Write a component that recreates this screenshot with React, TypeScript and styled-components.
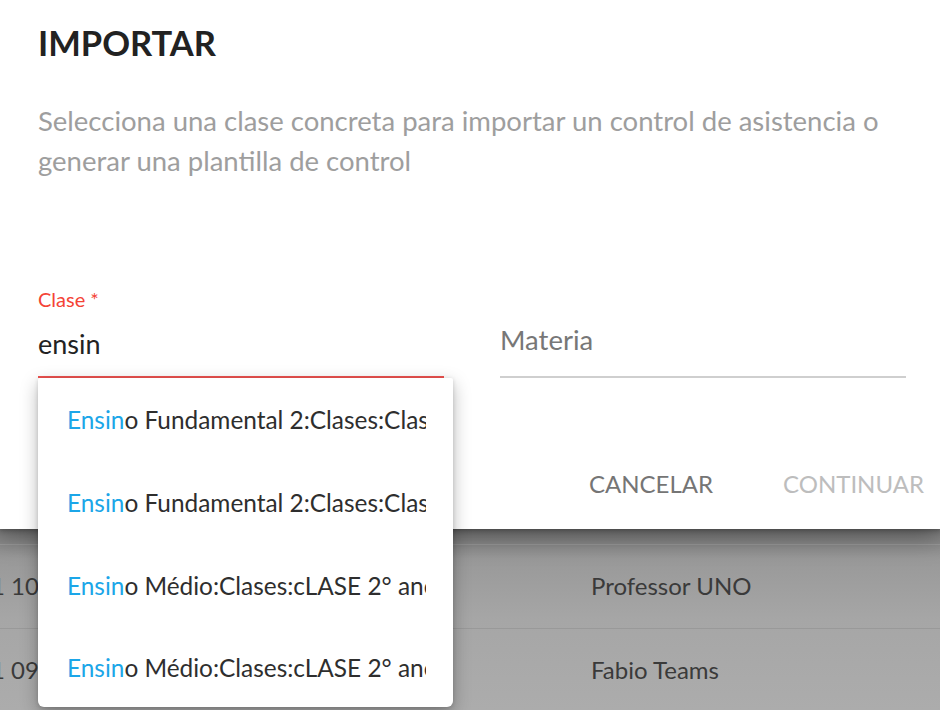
import * as React from 'react';
import styled, { createGlobalStyle } from 'styled-components';

const Global = createGlobalStyle`
  html, body {
    margin: 0;
    padding: 0;
    background: #aaaaaa;
  }
  body {
    font-family: Lato, "Open Sans", sans-serif;
  }
`;

const Screen = styled.div`
  width: 940px;
  height: 710px;
  overflow: hidden;
  display: flex;
  flex-direction: column;
  background: #aaaaaa;
`;

const Dialog = styled.section`
  position: relative;
  z-index: 2;
  height: 529px;
  flex-shrink: 0;
  background: #ffffff;
  box-shadow: 0 8px 24px rgba(0, 0, 0, 0.35), 0 2px 4px rgba(0, 0, 0, 0.2);
  display: flex;
  flex-direction: column;
  padding: 0 34px 0 38px;
  box-sizing: border-box;
`;

const Title = styled.h2`
  margin: 23px 0 0 0;
  font-size: 34.5px;
  line-height: 40px;
  font-weight: 700;
  color: #222222;
`;

const Description = styled.p`
  margin: 38px 0 0 0;
  font-size: 27.5px;
  line-height: 40px;
  color: #9e9e9e;
`;

const Fields = styled.div`
  margin-top: 107px;
  display: grid;
  grid-template-columns: 406px 406px;
  column-gap: 56px;
  align-items: end;
`;

const Field = styled.div`
  position: relative;
  display: flex;
  flex-direction: column;
`;

const Label = styled.label`
  font-size: 20px;
  line-height: 22px;
  color: #f44336;
`;

const Input = styled.div<{ $focused?: boolean }>`
  padding: ${p => (p.$focused ? '12px 0 10px' : '8px 0 14px')};
  font-size: ${p => (p.$focused ? '27px' : '27.5px')};
  line-height: 44px;
  color: ${p => (p.$focused ? '#222222' : '#777777')};
  border-bottom: 2px solid ${p => (p.$focused ? '#ef5350' : '#cfcfcf')};
`;

const Menu = styled.ul`
  position: absolute;
  top: 100%;
  left: 0;
  width: 415px;
  margin: 0;
  padding: 0;
  list-style: none;
  background: #ffffff;
  border-radius: 2px 2px 6px 6px;
  box-shadow: 0 6px 18px rgba(0, 0, 0, 0.28), 0 1px 4px rgba(0, 0, 0, 0.15);
  z-index: 5;
`;

const Option = styled.li`
  height: 83px;
  display: flex;
  align-items: center;
  padding: 0 27px 0 29px;
  font-size: 24.4px;
  color: #2e2e2e;
  white-space: nowrap;
  overflow: hidden;

  &:last-child {
    height: 80px;
  }
`;

const OptionText = styled.span`
  display: block;
  overflow: hidden;
`;

const Match = styled.span`
  color: #1ba6e8;
`;

const Actions = styled.div`
  margin-top: auto;
  margin-right: -18px;
  padding-bottom: 24px;
  display: flex;
  justify-content: flex-end;
  gap: 70px;
`;

const Button = styled.button<{ $disabled?: boolean }>`
  font-family: inherit;
  border: none;
  background: none;
  padding: 0;
  height: 44px;
  font-size: 24px;
  text-transform: uppercase;
  color: ${p => (p.$disabled ? '#bdbdbd' : '#757575')};
`;

const Backdrop = styled.div`
  flex: 1;
  display: flex;
  flex-direction: column;
  background: linear-gradient(#7c7c7c 0px, #999999 30px, #a6a6a6 90px, #acacac 180px);
`;

const TopStrip = styled.div`
  height: 15px;
`;

const Row = styled.div`
  height: 83px;
  border-top: 1px solid #999999;
  display: grid;
  grid-template-columns: 591px 1fr;
  align-items: center;
  font-size: 24px;
  color: #3a3a3a;
`;

const Cell = styled.div<{ $shift?: number }>`
  margin-left: ${p => p.$shift || 0}px;
  margin-top: -2px;
  white-space: nowrap;
`;

const options = [
  'o Fundamental 2:Clases:Clase 6° ano A',
  'o Fundamental 2:Clases:Clase 7° ano B',
  'o Médio:Clases:cLASE 2° ano A',
  'o Médio:Clases:cLASE 2° ano B',
];

export default function App() {
  return (
    <Screen>
      <Global />
      <Dialog>
        <Title>IMPORTAR</Title>
        <Description>
          Selecciona una clase concreta para importar un control de asistencia o generar una plantilla de control
        </Description>
        <Fields>
          <Field>
            <Label>Clase *</Label>
            <Input $focused>ensin</Input>
            <Menu>
              {options.map((rest, i) => (
                <Option key={i}>
                  <OptionText>
                    <Match>Ensin</Match>
                    {rest}
                  </OptionText>
                </Option>
              ))}
            </Menu>
          </Field>
          <Field>
            <Input>Materia</Input>
          </Field>
        </Fields>
        <Actions>
          <Button>Cancelar</Button>
          <Button $disabled>Continuar</Button>
        </Actions>
      </Dialog>
      <Backdrop>
        <TopStrip />
        <Row>
          <Cell $shift={-9}>1 10:30</Cell>
          <Cell>Professor UNO</Cell>
        </Row>
        <Row>
          <Cell $shift={-9}>1 09:15</Cell>
          <Cell>Fabio Teams</Cell>
        </Row>
      </Backdrop>
    </Screen>
  );
}
